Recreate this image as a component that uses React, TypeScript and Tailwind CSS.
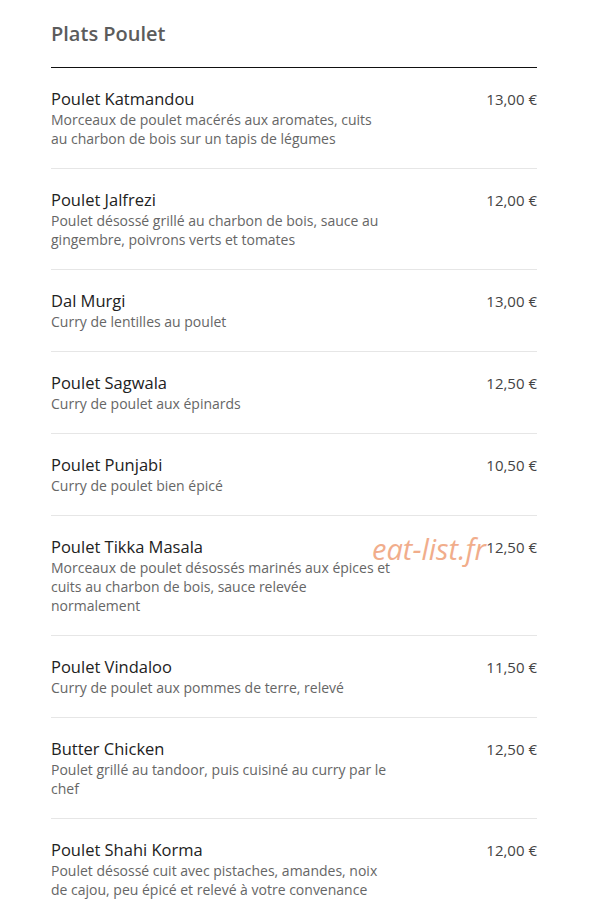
import React from 'react';

interface Dish {
  name: string;
  desc: string;
  price: string;
}

const dishes: Dish[] = [
  {
    name: 'Poulet Katmandou',
    desc: 'Morceaux de poulet macérés aux aromates, cuits au charbon de bois sur un tapis de légumes',
    price: '13,00 €',
  },
  {
    name: 'Poulet Jalfrezi',
    desc: 'Poulet désossé grillé au charbon de bois, sauce au gingembre, poivrons verts et tomates',
    price: '12,00 €',
  },
  { name: 'Dal Murgi', desc: 'Curry de lentilles au poulet', price: '13,00 €' },
  { name: 'Poulet Sagwala', desc: 'Curry de poulet aux épinards', price: '12,50 €' },
  { name: 'Poulet Punjabi', desc: 'Curry de poulet bien épicé', price: '10,50 €' },
  {
    name: 'Poulet Tikka Masala',
    desc: 'Morceaux de poulet désossés marinés aux épices et cuits au charbon de bois, sauce relevée normalement',
    price: '12,50 €',
  },
  { name: 'Poulet Vindaloo', desc: 'Curry de poulet aux pommes de terre, relevé', price: '11,50 €' },
  {
    name: 'Butter Chicken',
    desc: 'Poulet grillé au tandoor, puis cuisiné au curry par le chef',
    price: '12,50 €',
  },
  {
    name: 'Poulet Shahi Korma',
    desc: 'Poulet désossé cuit avec pistaches, amandes, noix de cajou, peu épicé et relevé à votre convenance',
    price: '12,00 €',
  },
];

const DishRow: React.FC<{ dish: Dish; last: boolean }> = ({ dish, last }) => (
  <div className={`flex justify-between pt-[20px] pb-[20px] ${last ? '' : 'border-b border-[#e6e6e6]'}`}>
    <div className="w-[340px]">
      <div className="text-[16.5px] leading-[22px] text-[#222]">{dish.name}</div>
      <div className="text-[14px] leading-[19px] text-[#666]">{dish.desc}</div>
    </div>
    <div className="text-[15px] leading-[22px] text-[#444] whitespace-nowrap">{dish.price}</div>
  </div>
);

export default function App() {
  return (
    <div
      className="relative min-h-[919px] bg-white"
      style={{ fontFamily: '"Open Sans", sans-serif' }}
    >
      <div className="ml-[51px] w-[486px]">
        <h2 className="pt-[20px] pb-[19px] text-[20px] leading-[28px] font-semibold text-[#5c5c5c] border-b border-[#111]">
          Plats Poulet
        </h2>
        {dishes.map((d, i) => (
          <DishRow key={d.name} dish={d} last={i === dishes.length - 1} />
        ))}
      </div>
      <div className="absolute left-[372px] top-[527px] text-[29px] italic text-[#f0a57f] opacity-90 pointer-events-none">
        eat-list.fr
      </div>
    </div>
  );
}
